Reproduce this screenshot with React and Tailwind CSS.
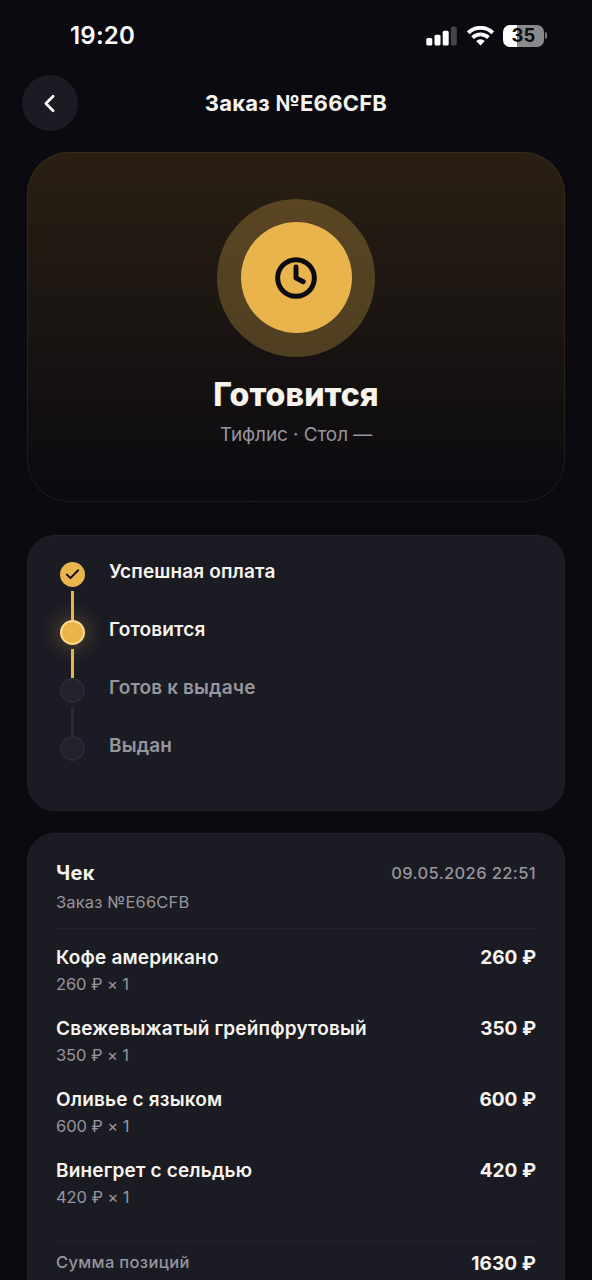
import React from "react";
import { Check, ChevronLeft, Clock } from "lucide-react";

const steps = [
  { label: "Успешная оплата", state: "done" },
  { label: "Готовится", state: "current" },
  { label: "Готов к выдаче", state: "pending" },
  { label: "Выдан", state: "pending" },
];

const items = [
  { name: "Кофе американо", price: 260, count: 1 },
  { name: "Свежевыжатый грейпфрутовый", price: 350, count: 1 },
  { name: "Оливье с языком", price: 600, count: 1 },
  { name: "Винегрет с сельдью", price: 420, count: 1 },
];

const dotStyles = {
  done: "bg-[#e9b44c]",
  current:
    "bg-[#e9b44c] border-[2.5px] border-[#ffdc8c] shadow-[0_0_22px_rgba(233,180,76,0.45)]",
  pending: "bg-[#22222c] border-[2.5px] border-[#2a2a34]",
};

const StatusBar = () => (
  <div className="flex h-[71px] items-center justify-between pl-[70px] pr-[45px]">
    <span className="text-[24px] font-semibold leading-[30px] tracking-[0.2px] text-white">
      19:20
    </span>
    <div className="flex items-center">
      {/* signal */}
      <svg width="31" height="20" viewBox="0 0 31 20">
        <rect x="0.3" y="12" width="6" height="7.5" rx="1.6" fill="#fff" />
        <rect x="8.5" y="8.7" width="6" height="10.8" rx="1.6" fill="#fff" />
        <rect x="16.7" y="4.7" width="6" height="14.8" rx="1.6" fill="#fff" />
        <rect x="24.8" y="0.5" width="6" height="19" rx="1.6" fill="#434348" />
      </svg>
      {/* wifi */}
      <svg className="ml-[10px]" width="27" height="20" viewBox="0 0 27 20">
        <g fill="none" stroke="#fff" strokeWidth="3.8">
          <path d="M1.2 6.8a17.6 17.6 0 0 1 24.6 0" />
          <path d="M5.6 11.6a11.4 11.4 0 0 1 15.8 0" />
        </g>
        <path
          d="M13.5 19.4 9.2 15.1a6.2 6.2 0 0 1 8.6 0Z"
          fill="#fff"
        />
      </svg>
      {/* battery */}
      <div className="ml-[9px] flex items-center">
        <div className="flex h-[22px] w-[41px] items-center justify-center rounded-[7px] bg-linear-to-r from-white from-35% to-[#8a8a8d] to-35% text-[18.5px] font-bold leading-none text-[#0b0a10]">
          35
        </div>
        <div className="ml-[1px] h-[7px] w-[2px] rounded-r-full bg-[#77777a]" />
      </div>
    </div>
  </div>
);

const OrderStatus = () => {
  return (
    <div className="h-[1280px] w-full overflow-hidden bg-[#0b0a10] font-['Inter',sans-serif] text-[#f7f4ee]">
      <StatusBar />

      {/* header */}
      <div className="flex h-[64px] items-center justify-between px-[22px]">
        <button className="flex size-[56px] items-center justify-center rounded-full bg-[#1b1b24] pr-[1px]">
          <ChevronLeft size={29} strokeWidth={2.2} className="text-white" />
        </button>
        <h1 className="-mt-[1px] text-[22px] font-bold leading-7 tracking-[0.25px]">
          Заказ №E66CFB
        </h1>
        <div className="w-[56px]" />
      </div>

      {/* current status */}
      <div className="mx-[27px] mt-[17px] flex h-[350px] flex-col items-center rounded-[42px] border border-[#e9b44c]/10 bg-linear-to-b from-[#2a1f12] to-[#0b0a10] bg-origin-border pt-[45.5px]">
        <div className="flex size-[158px] items-center justify-center rounded-full bg-[#e9b44c]/27">
          <div className="flex size-[111px] items-center justify-center rounded-full bg-[#e9b44c]">
            <Clock size={44} strokeWidth={2.7} className="text-[#0b0a10]" />
          </div>
        </div>
        <h2 className="mt-[18.5px] text-[32px] font-extrabold leading-[40px] tracking-[0.1px]">
          Готовится
        </h2>
        <p className="mt-[8px] text-[19px] leading-6 tracking-[-0.1px] text-[#97959e]">
          Тифлис · Стол —
        </p>
      </div>

      {/* progress */}
      <div className="mx-[27px] mt-[33px] h-[276px] rounded-[28px] border border-[#22222b] bg-[#1b1b24] pl-[32px] pt-[26px]">
        {steps.map((step, i) => (
          <div className="flex h-[58px] gap-[24px]" key={step.label}>
            <div className="flex w-[25px] flex-col items-center">
              <div
                className={`flex size-[25px] shrink-0 items-center justify-center rounded-full ${dotStyles[step.state]}`}
              >
                {step.state === "done" && (
                  <Check size={17} strokeWidth={2.6} className="text-[#0b0a10]" />
                )}
              </div>
              {i < steps.length - 1 && (
                <div
                  className={`mt-[4px] w-[3px] flex-1 ${
                    step.state === "pending" ? "bg-[#2a2a34]" : "bg-[#e9b44c]"
                  }`}
                />
              )}
            </div>
            <span
              className={`-mt-[2px] text-[19px] font-semibold leading-6 tracking-[0.14px] ${
                step.state === "pending" ? "text-[#97959e]" : ""
              }`}
            >
              {step.label}
            </span>
          </div>
        ))}
      </div>

      {/* receipt */}
      <div className="mx-[27px] mt-[22px] h-[500px] rounded-[28px] border border-[#22222b] bg-[#1b1b24] px-[28px] pt-[27px]">
        <div className="flex h-[68px] justify-between border-b border-[#24242e]">
          <div>
            <h3 className="text-[20px] font-bold leading-6 tracking-[0.3px]">Чек</h3>
            <p className="mt-[7px] text-[16.5px] leading-5 tracking-[0.15px] text-[#97959e]">
              Заказ №E66CFB
            </p>
          </div>
          <span className="text-[16.5px] font-medium leading-6 tracking-[0.38px] text-[#97959e]">
            09.05.2026 22:51
          </span>
        </div>

        <div className="h-[313px] border-b border-[#24242e] pt-[17px]">
          {items.map((item) => (
            <div className="flex h-[71px] justify-between" key={item.name}>
              <div>
                <p className="text-[19px] font-semibold leading-6 tracking-[0.17px]">
                  {item.name}
                </p>
                <p className="mt-[4px] text-[16.5px] leading-5 tracking-[-0.1px] text-[#97959e]">
                  {item.price} ₽ × {item.count}
                </p>
              </div>
              <span className="text-[19px] font-bold leading-6">
                {item.price} ₽
              </span>
            </div>
          ))}
        </div>

        <div className="flex justify-between pt-[10px]">
          <span className="-mt-[2px] text-[16.5px] font-medium leading-6 tracking-[0.35px] text-[#97959e]">
            Сумма позиций
          </span>
          <span className="text-[19px] font-bold leading-6 tracking-[0.1px]">
            1630 ₽
          </span>
        </div>
      </div>
    </div>
  );
};

export default OrderStatus;
